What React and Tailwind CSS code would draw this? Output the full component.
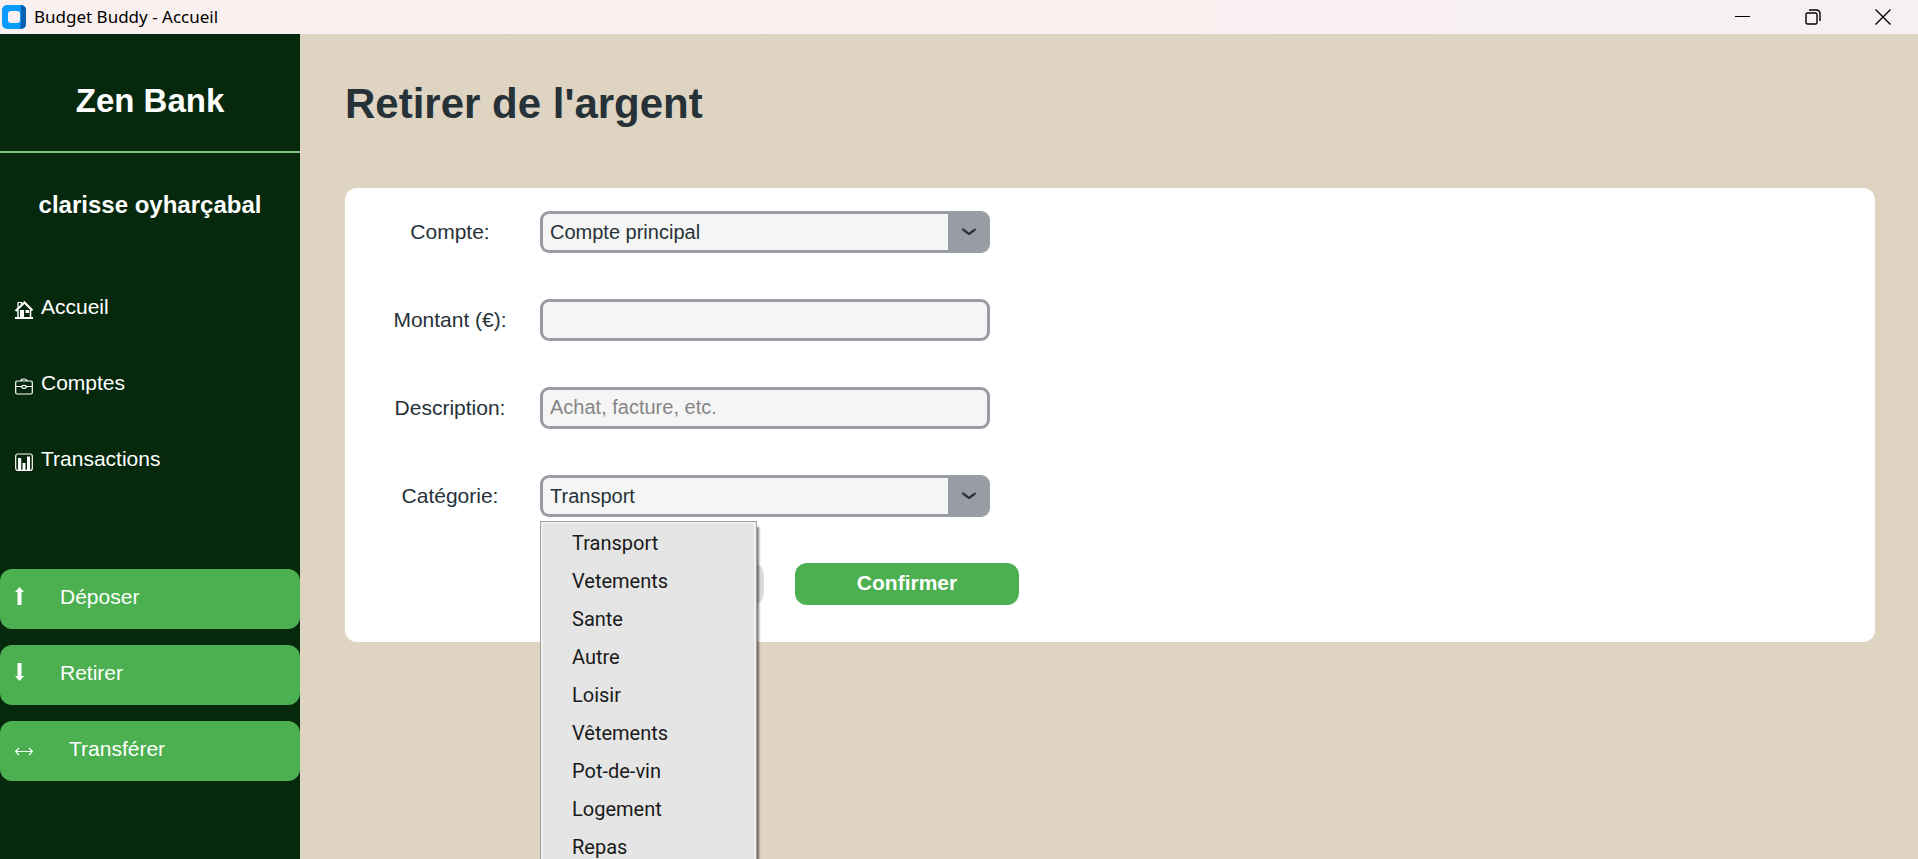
import React from "react";

const navItems = [
  { label: "Accueil", Icon: HouseIcon },
  { label: "Comptes", Icon: CaseIcon },
  { label: "Transactions", Icon: ChartIcon },
];

const actions = [
  { label: "Déposer", Icon: UpIcon },
  { label: "Retirer", Icon: DownIcon },
  { label: "Transférer", Icon: SwapIcon },
];

const accounts = ["Compte principal"];

const categories = [
  "Transport",
  "Vetements",
  "Sante",
  "Autre",
  "Loisir",
  "Vêtements",
  "Pot-de-vin",
  "Logement",
  "Repas",
];

function AppLogo() {
  return (
    <svg className="size-6" viewBox="0 0 24 24" aria-hidden="true">
      <rect width="24" height="24" rx="5" fill="#0a9bff" />
      <path d="M19 0a5 5 0 0 1 5 5v14a5 5 0 0 1-5 5l-2-2 2-4V6l-1-4z" fill="#0560b0" />
      <path d="M5 0h13l1 4-3 2H6z" fill="#0a9bff" />
      <path d="M5 24h11l3-3-3-3H6z" fill="#0a9bff" />
      <rect x="6" y="6" width="12" height="12" rx="3" fill="#faf0ef" />
    </svg>
  );
}

function HouseIcon() {
  return (
    <svg className="h-[18px] w-[18px]" viewBox="0 0 18 18" aria-hidden="true">
      <path d="M3 8V1.500h3.500V4" fill="none" stroke="#fff" strokeWidth="1.200" />
      <path d="M.5 10 9.500 1.500 17.500 9.500" fill="none" stroke="#fff" strokeWidth="2.200" />
      <path d="M3 8.500V16M15.500 9v7" stroke="#fff" strokeWidth="1.500" />
      <path d="M5 9h4v8H5zM10.500 9h3.500v3h-3.500zM0 16h18v2H0z" fill="#fff" />
    </svg>
  );
}

function CaseIcon() {
  return (
    <svg className="h-[18px] w-[18px]" viewBox="0 0 18 18" fill="none" stroke="#fff" strokeWidth="1.200" aria-hidden="true">
      <rect x=".7" y="4" width="16.600" height="13" rx="1.500" />
      <path d="M6 4C6 2.300 7 2 9 2s3 .3 3 2M.7 9.500h6M17.300 9.500h-6" />
      <ellipse cx="9" cy="9.800" rx="2.300" ry="1.500" />
    </svg>
  );
}

function ChartIcon() {
  return (
    <svg className="h-[18px] w-[18px]" viewBox="0 0 18 18" aria-hidden="true">
      <rect x=".7" y="1" width="16.600" height="16.300" rx="2" fill="none" stroke="#fff" strokeWidth="1.200" />
      <path d="M3 5h3.200v12H3zM7.500 10h3v7h-3zM12 3.500h3V17h-3z" fill="#fff" />
    </svg>
  );
}

function UpIcon() {
  return (
    <svg className="mb-0.5 h-[18px] w-[9px]" viewBox="0 0 9 18" fill="#fff" aria-hidden="true">
      <path d="M4.500 0 9 5H6.500v13h-4V5H0z" />
    </svg>
  );
}

function DownIcon() {
  return (
    <svg className="mb-0.5 h-[18px] w-[9px]" viewBox="0 0 9 18" fill="#fff" aria-hidden="true">
      <path d="M4.500 18 9 13H6.500V0h-4v13H0z" />
    </svg>
  );
}

function SwapIcon() {
  return (
    <svg className="mt-1 h-[9px] w-[18px]" viewBox="0 0 18 9" fill="none" stroke="#fff" strokeWidth="1.200" aria-hidden="true">
      <path d="M.5 4.500h17M4 1 .5 4.500 4 8M14 1l3.500 3.500L14 8" />
    </svg>
  );
}

function ComboArrow() {
  return (
    <svg className="h-2 w-4" viewBox="0 0 16 8" fill="none" stroke="#263238" aria-hidden="true">
      <path d="M2 1.500 6 4.500 8 5.800 10 4.500 14 1.500" strokeWidth="2.200" strokeLinecap="round" strokeLinejoin="round" />
      <path d="M2 1.500h.8M13.200 1.500h.8M7.500 4h1" stroke="#979da2" strokeWidth=".9" />
    </svg>
  );
}

function Field({ id, label, children }) {
  return (
    <div className="flex items-center">
      <label htmlFor={id} className="w-[120px] text-center text-[21px] leading-6">
        {label}
      </label>
      <div className="relative ml-[30px] w-[450px]">{children}</div>
    </div>
  );
}

function Combo({ id, options }) {
  return (
    <div className="flex h-[42px] items-center rounded-[9px] bg-[#979da2] py-[3px] pl-[3px]">
      <select
        id={id}
        className="h-full flex-1 appearance-none rounded-l-md bg-[#f5f5f5] pl-[7px] text-xl leading-6 outline-none"
      >
        {options.map((o) => (
          <option key={o}>{o}</option>
        ))}
      </select>
      <span className="flex w-[42px] justify-center">
        <ComboArrow />
      </span>
    </div>
  );
}

const inputClass =
  "block h-[42px] w-full rounded-[9px] border-[3px] border-[#979da2] bg-[#f5f5f5] px-[7px] pb-0.5 text-xl leading-6 outline-none placeholder:text-[#858585]";

export default function App() {
  return (
    <div className="flex h-screen flex-col overflow-hidden bg-[#dfd4c2] font-['Liberation_Sans',Arial,sans-serif] text-[#263238]">
      <header className="flex h-[34px] shrink-0 items-center justify-between bg-linear-to-r from-[#faf0ef] via-[#faf0ef] to-[#f6f0f5] pl-0.5 text-black">
        <div className="flex items-center gap-2">
          <AppLogo />
          <span className="font-['Noto_Sans',sans-serif] text-[17px] leading-6">Budget Buddy - Accueil</span>
        </div>
        <div className="flex">
          <button aria-label="Réduire" className="flex h-[34px] w-[70px] items-center justify-center">
            <svg className="size-4" viewBox="0 0 16 16" stroke="currentColor" aria-hidden="true">
              <path d="M0 7.500h15" />
            </svg>
          </button>
          <button aria-label="Restaurer" className="flex h-[34px] w-[70px] items-center justify-center">
            <svg className="size-4" viewBox="0 0 16 16" fill="none" stroke="currentColor" strokeWidth="1.400" aria-hidden="true">
              <rect x="1" y="4" width="11" height="11" rx="1.500" />
              <path d="M4 1h7.500A3.500 3.500 0 0 1 15 4.500V12" />
            </svg>
          </button>
          <button aria-label="Fermer" className="flex h-[34px] w-[70px] items-center justify-center">
            <svg className="size-4" viewBox="0 0 16 16" stroke="currentColor" strokeWidth="1.400" aria-hidden="true">
              <path d="m.5.5 15 15M15.500.5l-15 15" />
            </svg>
          </button>
        </div>
      </header>

      <div className="flex min-h-0 flex-1">
        <aside className="flex w-[300px] shrink-0 flex-col bg-[#06280c] text-white">
          <div className="flex h-[119px] items-center justify-center border-b-2 border-[#81c784] pt-4">
            <p className="text-[33px] leading-10 font-bold">Zen Bank</p>
          </div>
          <p className="pt-9 text-center text-2xl leading-8 font-bold">clarisse oyharçabal</p>
          <nav className="mt-[57px] flex flex-col gap-4">
            {navItems.map(({ label, Icon }) => (
              <a key={label} href="#" className="flex h-[60px] items-center gap-2 px-[15px] pb-0.5 text-[21px] leading-6">
                <span className="pt-1.5">
                  <Icon />
                </span>
                {label}
              </a>
            ))}
          </nav>
          <div className="mt-[79px] flex flex-col gap-4">
            {actions.map(({ label, Icon }) => (
              <button
                key={label}
                className="flex h-[60px] items-center gap-9 rounded-xl bg-[#4caf50] px-[15px] pb-1 text-[21px] leading-6"
              >
                <Icon />
                {label}
              </button>
            ))}
          </div>
        </aside>

        <main className="min-w-0 flex-1 pr-[43px] pl-[45px] pt-[45px]">
          <h1 className="text-[42px] leading-[50px] font-bold">Retirer de l&apos;argent</h1>
          <form className="mt-[59px] rounded-xl bg-white px-[45px] pt-[23px] pb-[37px]">
            <div className="flex flex-col gap-[46px]">
              <Field id="compte" label="Compte:">
                <Combo id="compte" options={accounts} />
              </Field>
              <Field id="montant" label="Montant (€):">
                <input id="montant" type="text" className={inputClass} />
              </Field>
              <Field id="description" label="Description:">
                <input id="description" type="text" placeholder="Achat, facture, etc." className={inputClass} />
              </Field>
              <Field id="categorie" label="Catégorie:">
                <Combo id="categorie" options={categories} />
                <ul
                  role="listbox"
                  aria-label="Catégorie"
                  className="absolute top-full left-0 z-10 mt-1 w-[217px] border border-[#a0a0a0] bg-[#e5e5e5] py-0.5 font-[Roboto,sans-serif] text-xl leading-[38px] text-[#1a1a1a] shadow-[inset_0_0_0_2px_#f0f0f0,2px_6px_2px_rgba(0,0,0,0.5)]"
                >
                  {categories.map((c) => (
                    <li key={c} role="option" aria-selected={c === "Transport"} className="pl-[31px]">
                      {c}
                    </li>
                  ))}
                </ul>
              </Field>
            </div>
            <div className="mt-[46px] ml-[150px] flex gap-[31px]">
              <button type="button" aria-label="Annuler" className="h-[42px] w-56 rounded-xl bg-[#dcdcdc]" />
              <button
                type="button"
                className="h-[42px] w-56 rounded-xl bg-[#4caf50] pb-0.5 text-[21px] leading-6 font-bold text-white"
              >
                Confirmer
              </button>
            </div>
          </form>
        </main>
      </div>
    </div>
  );
}
